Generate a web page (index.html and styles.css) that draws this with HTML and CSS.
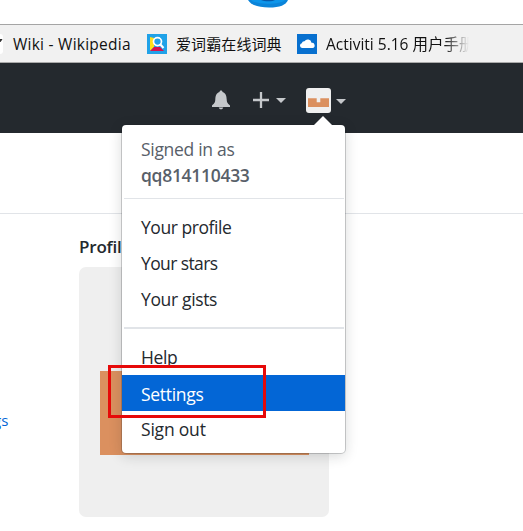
FILE: index.html
```html
<!DOCTYPE html>
<html lang="zh-CN">
<head>
<meta charset="utf-8">
<title>Settings menu</title>
<link rel="stylesheet" href="styles.css">
</head>
<body>
<div class="browser-top">
  <svg class="browser-logo" width="40" height="9" viewBox="0 0 40 9"><path d="M0 0h40c-2 5-8 7.500-19 7.500C10 7.500 3 5 0 0z" fill="#0b84d9"/><path d="M3 0h34c-4 5-30 5-34 0z" fill="#0d95ea"/><path d="M13 0h14c-2 1.800-11 1.800-14 0z" fill="#0759a8"/></svg>
</div>
<nav class="bookmarks">
  <span class="wiki-icon"><svg width="3" height="20" viewBox="0 0 3 20"><path d="M0 5h2.2v.7L.5 8H0z" fill="#333"/></svg></span>
  <span class="bookmark wiki">Wiki - Wikipedia</span>
  <svg class="dict-icon" width="20" height="20" viewBox="0 0 20 20"><path fill="#20a2e8" d="M0 0h20v20H0z"/><path d="M3 3l4 1v9l-4 4z" fill="#ffe01b"/><path d="M3 17l4-4h6l4 4z" fill="#d5144f"/><circle cx="10.500" cy="7.600" r="4" fill="#20a2e8" stroke="#fff" stroke-width="1.700"/><path d="M13 10l3.500 4" stroke="#fff" stroke-width="2"/></svg>
  <span class="bookmark dict">爱词霸在线词典</span>
  <svg class="cloud-icon" width="20" height="20" viewBox="0 0 20 20"><path fill="#0870cf" d="M0 0h20v20H0z"/><path d="M5 14a2.400 2.400 0 0 1-.2-4.700 2.500 2.500 0 0 1 2.700-2 3.800 3.800 0 0 1 7 1.500A2.600 2.600 0 0 1 15.500 14z" fill="#fff"/></svg>
  <span class="bookmark activiti">Activiti 5.16 用户手册</span>
</nav>
<header class="site-header">
  <svg class="bell" width="20" height="20" viewBox="0 0 20 20"><path d="M10 .5c1 0 1.500.7 1.500 1.500 3.500 1.500 4 4 4.200 7.500.2 3.500 1.300 4 3.300 6V17H1v-1.500c2-2 3.100-2.500 3.300-6C4.500 6 5 3.500 8.500 2 8.500 1.200 9 .5 10 .5zM7.800 17.500h4.400c-.2 1.200-1 1.800-2.200 1.800s-2-.6-2.200-1.800z" fill="#c5c8cb"/></svg>
  <svg class="plus" width="16" height="16" viewBox="0 0 16 16"><path d="M8 0v16M0 8h16" stroke="#c5c8cb" stroke-width="2.300"/></svg>
  <span class="caret add-caret"></span>
  <svg class="avatar-small" width="25" height="25" viewBox="0 0 25 25"><rect width="25" height="25" rx="3" fill="#f0f0f0"/><path d="M2 10.300h8.700v4h3.600v-4H23V19H2z" fill="#db905f"/></svg>
  <span class="caret user-caret"></span>
  <div class="menu">
    <div class="signed">Signed in as<strong>qq814110433</strong></div>
    <div class="group links">
      <a class="item profile">Your profile</a>
      <a class="item stars">Your stars</a>
      <a class="item gists">Your gists</a>
    </div>
    <div class="group account">
      <a class="item help">Help</a>
      <a class="item selected">Settings</a>
      <a class="item signout">Sign out</a>
    </div>
  </div>
</header>
<main class="page">
  <div class="side"><a class="side-link">gs</a></div>
  <section class="picture">
    <h2>Profile</h2>
    <div class="avatar"><div class="avatar-shape"></div></div>
  </section>
</main>
<div class="highlight"></div>
</body>
</html>
```
FILE: styles.css
```css
* { box-sizing: border-box; }
body { margin: 0; width: 523px; height: 531px; overflow: hidden; position: relative; background: #fff; font-family: "Open Sans", "Noto Sans CJK SC", sans-serif; color: #24292e; }
.browser-top { height: 24px; padding-left: 248px; }
.browser-logo { display: block; }
.bookmarks { height: 39px; display: flex; align-items: center; background: #f1f1f1; border-top: 1px solid #a5a5a5; border-bottom: 1px solid #aaa; }
.wiki-icon { width: 3px; height: 20px; background: #fff; border-radius: 0 3px 3px 0; flex: none; }
.bookmark { font-size: 15.5px; line-height: 36px; padding-top: 1px; color: #111; white-space: nowrap; flex: none; }
.wiki { width: 134px; padding-left: 10px; margin-right: 10px; letter-spacing: .25px; }
.dict { width: 110px; margin: 0 11px 0 9px; font-size: 15px; letter-spacing: .1px; }
.activiti { width: 143px; margin-left: 9px; overflow: hidden; -webkit-mask-image: linear-gradient(90deg, #000 118px, transparent 143px); mask-image: linear-gradient(90deg, #000 118px, transparent 143px); }
.dict-icon, .cloud-icon { flex: none; }
.site-header { position: relative; z-index: 2; height: 70px; background: #24292e; display: flex; align-items: flex-start; padding-left: 211px; }
.bell { margin-top: 27px; }
.plus { margin: 29px 0 0 22px; }
.caret { border: 5px solid transparent; border-top-color: #c5c8cb; border-bottom: 0; }
.add-caret { margin: 35px 0 0 7px; }
.avatar-small { margin: 25px 0 0 20px; }
.user-caret { margin: 36px 0 0 5px; }
.menu { position: absolute; left: 122px; top: 62px; width: 223px; height: 328px; background: #fff; border-radius: 4px; box-shadow: 0 0 0 1px rgba(27,31,35,.2), 0 3px 13px rgba(27,31,35,.18); font-size: 17.5px; }
.menu::before { content: ""; position: absolute; left: 192px; top: -9px; border: 9px solid transparent; border-top: 0; border-bottom-color: #fff; }
.signed { height: 74px; margin: 0 1px 0 2px; padding: 11px 0 0 17px; line-height: 26px; color: #586069; border-bottom: 1px solid #e1e4e8; letter-spacing: -.3px; }
.signed strong { display: block; font-weight: 600; letter-spacing: -.3px; }
.links { height: 130px; margin: 0 1px 0 2px; padding-top: 10px; border-bottom: 2px solid #e1e4e8; }
.item { display: block; height: 36px; line-height: 36px; padding-left: 19px; letter-spacing: -.2px; }
.links .item { padding-left: 17px; }
.item.profile { letter-spacing: -.45px; }
.item.stars { letter-spacing: -.6px; }
.item.gists { letter-spacing: -.35px; }
.item.help { letter-spacing: -.4px; }
.account { padding-top: 10px; }
.selected { background: #0366d6; color: #fff; line-height: 38px; letter-spacing: -.3px; }
.signout { line-height: 37px; }
.page { display: flex; height: 398px; background: linear-gradient(#e1e4e8, #e1e4e8) 0 80px / 100% 1px no-repeat; }
.side { width: 79px; padding-top: 275px; }
.side-link { display: block; color: #0366d6; font-size: 15px; line-height: 24px; margin-left: -7px; }
.picture h2 { margin: 101px 0 7px; font-size: 17px; line-height: 26px; font-weight: 600; letter-spacing: -.2px; }
.avatar { width: 250px; height: 250px; padding: 104px 20px 0 21px; border-radius: 7px; background: #efefef; }
.avatar-shape { height: 84px; background: #db905f; }
.highlight { position: absolute; z-index: 3; left: 108px; top: 365px; width: 158px; height: 53px; border: 3px solid #e60909; }
```
